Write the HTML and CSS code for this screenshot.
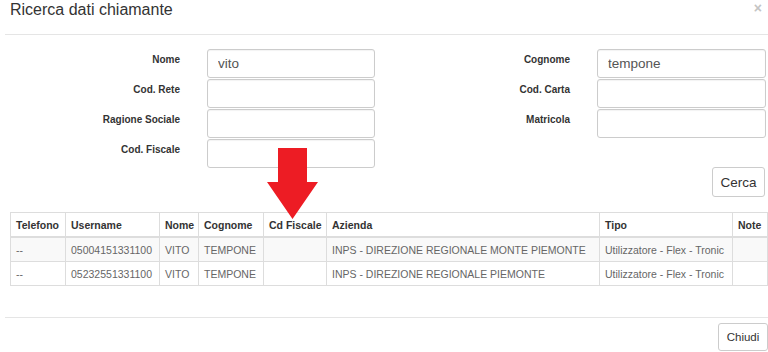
FILE: index.html
```html
<!DOCTYPE html>
<html lang="it">
<head>
    <meta charset="UTF-8">
    <meta name="viewport" content="width=device-width, initial-scale=1.0">
    <title>Ricerca dati chiamante</title>
    <link rel="stylesheet" href="styles.css">
</head>
<body>
    <div class="modal">
        <div class="modal-header">
            <h4 class="modal-title">Ricerca dati chiamante</h4>
            <span class="close">&times;</span>
        </div>
        <div class="modal-body">
            <form class="ricerca">
                <label for="nome">Nome</label>
                <input type="text" id="nome" value="vito">
                <label for="cognome">Cognome</label>
                <input type="text" id="cognome" value="tempone">

                <label for="codRete">Cod. Rete</label>
                <input type="text" id="codRete">
                <label for="codCarta">Cod. Carta</label>
                <input type="text" id="codCarta">

                <label for="ragione">Ragione Sociale</label>
                <input type="text" id="ragione">
                <label for="matricola">Matricola</label>
                <input type="text" id="matricola">

                <label for="codFiscale">Cod. Fiscale</label>
                <input type="text" id="codFiscale">
            </form>
            <div class="azioni">
                <button type="button" class="btn btn-cerca">Cerca</button>
            </div>

            <div class="risultati">
                <table class="tabella">
                    <colgroup>
                        <col style="width:55px">
                        <col style="width:94px">
                        <col style="width:39px">
                        <col style="width:65px">
                        <col style="width:63px">
                        <col style="width:273px">
                        <col style="width:133px">
                        <col style="width:35px">
                    </colgroup>
                    <thead>
                        <tr><th>Telefono</th><th>Username</th><th>Nome</th><th>Cognome</th><th>Cd Fiscale</th><th>Azienda</th><th>Tipo</th><th>Note</th></tr>
                    </thead>
                    <tbody>
                        <tr><td>--</td><td>05004151331100</td><td>VITO</td><td>TEMPONE</td><td></td><td>INPS - DIREZIONE REGIONALE MONTE PIEMONTE</td><td>Utilizzatore - Flex - Tronic</td><td></td></tr>
                        <tr><td>--</td><td>05232551331100</td><td>VITO</td><td>TEMPONE</td><td></td><td>INPS - DIREZIONE REGIONALE PIEMONTE</td><td>Utilizzatore - Flex - Tronic</td><td></td></tr>
                    </tbody>
                </table>
                <!-- freccia rossa sopra la colonna Cd Fiscale -->
                <svg class="freccia" width="51" height="71" viewBox="0 0 51 71">
                    <polygon points="11,0 40,0 40,34 51,34 25.5,71 0,34 11,34" fill="#ed1c24"/>
                </svg>
            </div>
        </div>
        <div class="modal-footer">
            <button type="button" class="btn btn-chiudi">Chiudi</button>
        </div>
    </div>
</body>
</html>
```

FILE: styles.css
```css
body {
    margin: 0;
    background-color: #fff;
    font-family: "Liberation Sans", Arial, sans-serif;
    color: #333;
}
.modal {
    margin-left: 5px;
    position: relative;
}
.modal-header {
    height: 34px;
    border-bottom: 1px solid #e5e5e5;
    display: flex;
    justify-content: space-between;
    align-items: flex-start;
    padding: 0 6px 0 5px;
}
.modal-title {
    margin: 0;
    padding-top: 1px;
    font-size: 16px;
    font-weight: normal;
    color: #333;
}
.close {
    font-size: 14px;
    font-weight: bold;
    line-height: 14px;
    color: #c4c4c4;
    padding-top: 1px;
}
.modal-body {
    padding-top: 14px;
}
.ricerca {
    display: grid;
    grid-template-columns: 202px 168px 222px 169px;
    grid-auto-rows: 30px;
}
.ricerca label {
    text-align: right;
    padding-right: 27px;
    padding-top: 5px;
    font-size: 10px;
    font-weight: bold;
    color: #333;
}
.ricerca input {
    box-sizing: border-box;
    height: 29px;
    margin: 0;
    padding: 0 10px;
    border: 1px solid #ccc;
    border-radius: 3px;
    box-shadow: inset 0 1px 1px rgba(0, 0, 0, 0.05);
    font-family: inherit;
    font-size: 13.5px;
    color: #555;
}
.azioni {
    display: flex;
    justify-content: flex-end;
    padding-right: 3px;
    margin-top: -2px;
}
.btn {
    box-sizing: border-box;
    background-color: #fff;
    border: 1px solid #ccc;
    border-radius: 3px;
    font-family: inherit;
    color: #333;
    cursor: pointer;
}
.btn-cerca {
    width: 53px;
    height: 30px;
    font-size: 13.5px;
}
.risultati {
    position: relative;
    margin: 15px 0 0 5px;
}
.tabella {
    border-collapse: collapse;
    table-layout: fixed;
    width: 757px;
    font-size: 10.5px;
}
.tabella th, .tabella td {
    border: 1px solid #ddd;
    text-align: left;
    padding: 0 5px;
    height: 23px;
    white-space: nowrap;
    overflow: hidden;
}
.tabella th {
    border-bottom: 2px solid #ddd;
    font-weight: bold;
    color: #333;
}
.tabella td {
    color: #666;
}
.tabella tbody tr:nth-child(odd) {
    background-color: #f9f9f9;
}
.freccia {
    position: absolute;
    left: 257px;
    top: -64px;
}
.modal-footer {
    margin-top: 31px;
    border-top: 1px solid #e5e5e5;
    padding-top: 5px;
    display: flex;
    justify-content: flex-end;
}
.btn-chiudi {
    width: 50px;
    height: 28px;
    font-size: 11.5px;
}
```
